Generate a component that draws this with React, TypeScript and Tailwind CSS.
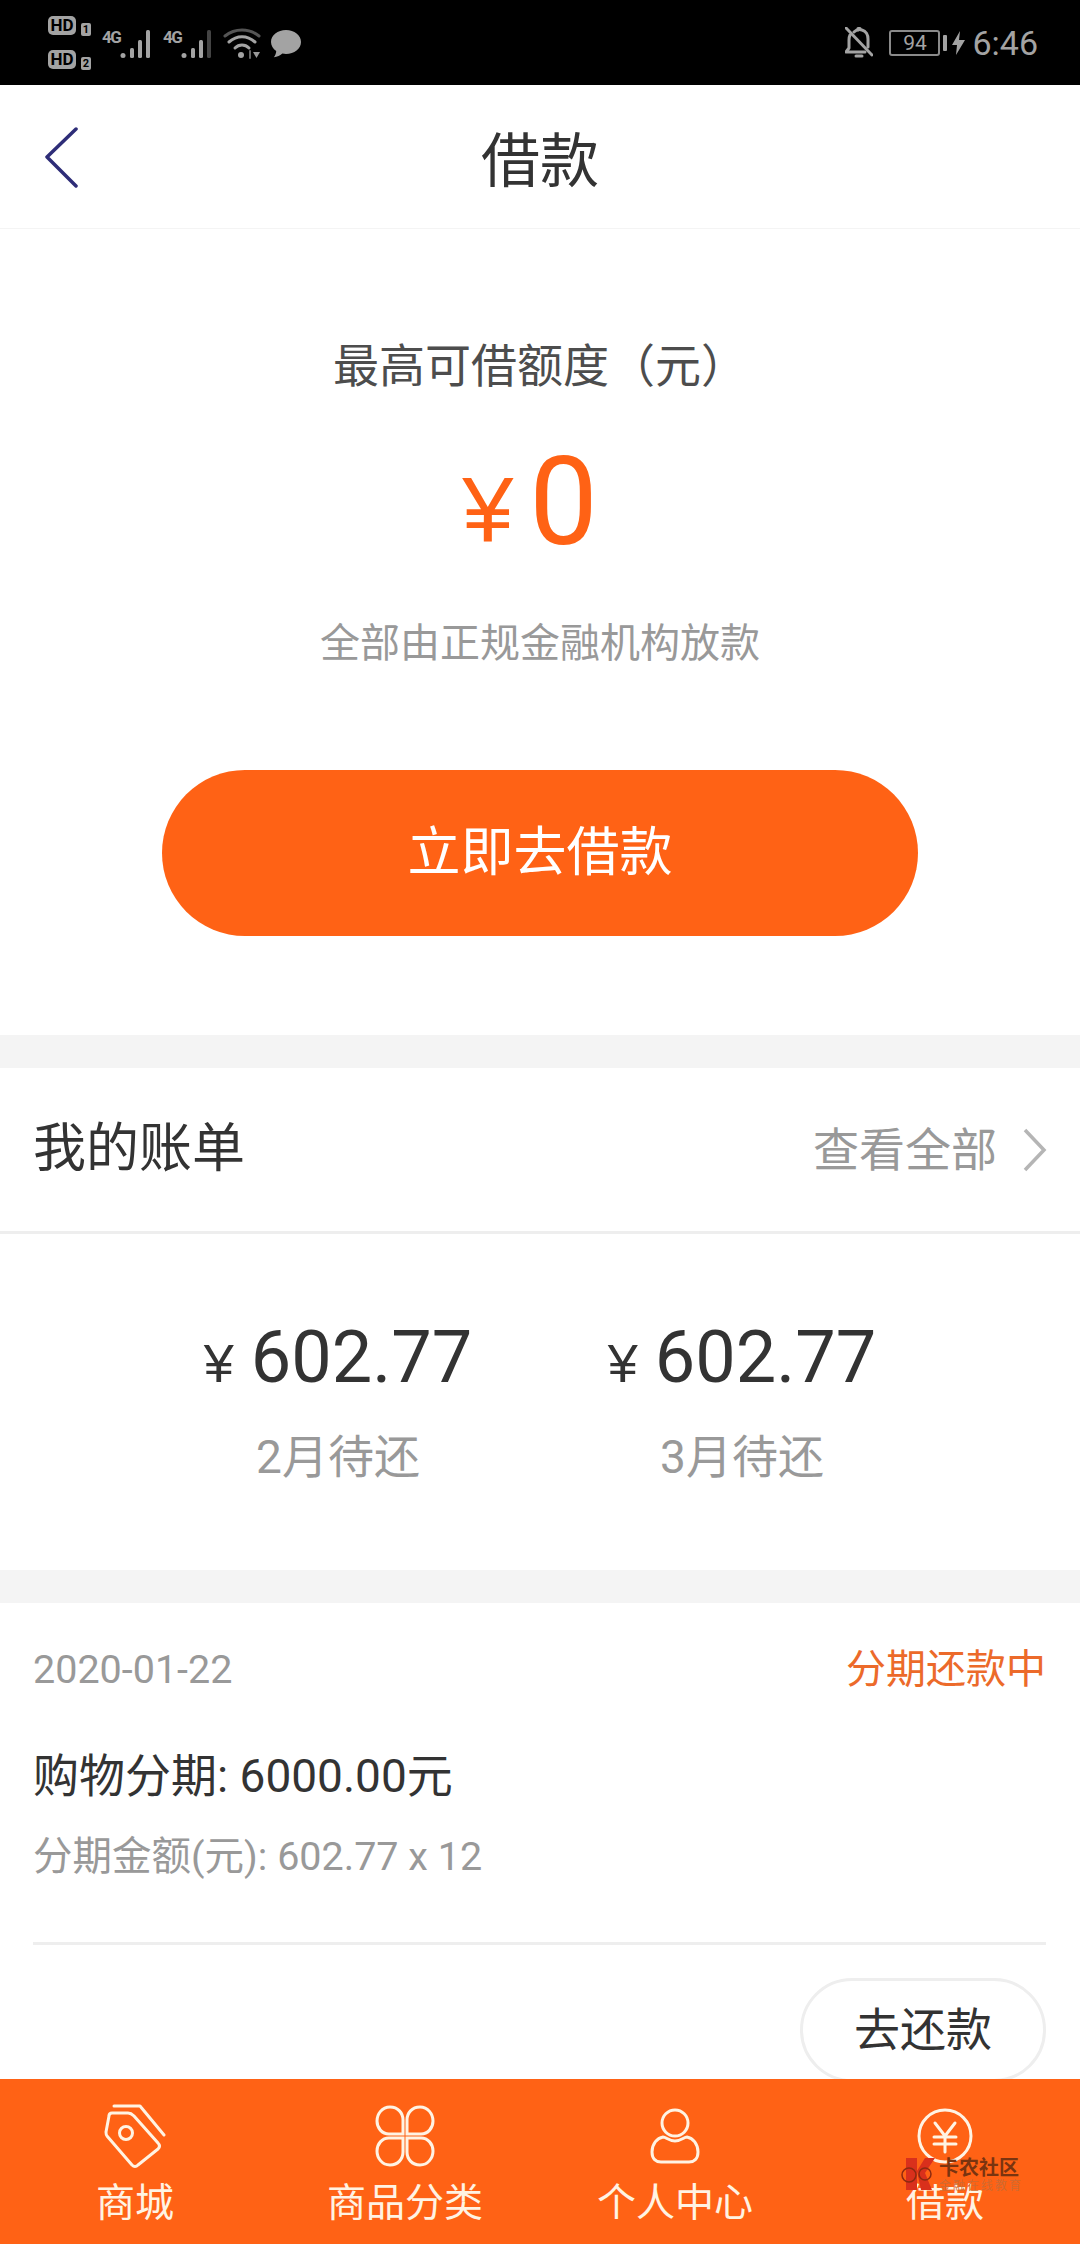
const font = { cjk: "font-['Roboto','Noto_Sans_CJK_SC',sans-serif]" }

function Signal({ dim }: { dim?: boolean }) {
  return (
    <svg width="33" height="32" viewBox="0 0 33 32" className="text-[#a3a3a3]">
      <circle cx="3" cy="27.5" r="2.5" fill="currentColor" />
      <rect x="10" y="20" width="4" height="10" rx="1.5" fill="currentColor" />
      <rect x="18" y="12" width="4" height="18" rx="1.5" fill="currentColor" />
      <rect x="26" y="2" width="4" height="28" rx="1.5" fill={dim ? "#444" : "currentColor"} />
    </svg>
  )
}

function HdBadge({ n }: { n: number }) {
  return (
    <div className="flex items-end gap-[5px]">
      <span className="w-[28px] h-[19px] rounded-[5px] bg-[#a3a3a3] text-black text-[17px] leading-[19px] font-bold text-center font-['Roboto',sans-serif]">HD</span>
      <span className="w-[10px] h-[13px] -mb-[1px] rounded-[2px] bg-[#a3a3a3] text-black text-[11px] leading-[13px] font-bold text-center font-['Roboto',sans-serif]">{n}</span>
    </div>
  )
}

function NetType() {
  return (
    <span className="w-[18px] text-[17px] leading-[18px] font-bold mb-[14px] tracking-[-1.5px] font-['Roboto',sans-serif]">4G</span>
  )
}

function StatusBar() {
  return (
    <div className="h-[85px] bg-black flex items-center justify-between pl-[48px] pr-[42px] text-[#a3a3a3]">
      <div className="flex items-center">
        <div className="flex flex-col gap-[15px] -mt-[1px]">
          <HdBadge n={1} />
          <HdBadge n={2} />
        </div>
        <div className="flex items-end ml-[11px] mt-[2px]">
          <NetType />
          <Signal />
        </div>
        <div className="flex items-end ml-[10px] mt-[2px]">
          <NetType />
          <Signal dim />
        </div>
        <svg width="38" height="32" viewBox="0 0 38 32" className="ml-[9px] mt-[2px]" fill="none" stroke="currentColor" strokeWidth="3" strokeLinecap="round">
          <path d="M2 8 C12 0 26 0 36 8" stroke="#555" />
          <path d="M6 14 C14 7 24 7 32 14" />
          <path d="M12 20 C16 16 22 16 26 20" />
          <circle cx="18" cy="27" r="3" fill="currentColor" stroke="none" />
          <path d="M27 23v7" stroke="#666" strokeWidth="2" />
          <path d="M30 24h7l-3.500 6z" fill="#999" stroke="none" />
        </svg>
        <svg width="32" height="32" viewBox="0 0 32 32" className="ml-[9px] mt-[2px]" fill="currentColor">
          <path d="M16 2C7.700 2 1 7.400 1 14c0 3.600 2 6.800 5.200 9 .1 2-1 4.600-2.400 6.300 3.200-.2 6.800-1.800 8.600-3.700 1.200.2 2.400.4 3.600.4 8.300 0 15-5.400 15-12S24.300 2 16 2z" />
        </svg>
      </div>
      <div className="flex items-center">
        <svg width="28" height="32" viewBox="0 0 28 32" fill="none" stroke="currentColor" strokeWidth="3" strokeLinecap="round" strokeLinejoin="round">
          <path d="M5 8c-1 2-1 3-1 5v8l-3 4h19" />
          <path d="M9 5c2-2 5-3 8-2 4 1 6 5 6 9v8" />
          <path d="M13 3V1.500h2" />
          <path d="M11 29h6" />
          <path d="M1 1l26 27" />
        </svg>
        <div className="ml-[16px] w-[51px] h-[26px] rounded-[3px] border-2 border-[#8a8a8a] text-[21px] leading-[22px] text-center font-['Roboto',sans-serif]">94</div>
        <div className="ml-[3px] w-[4px] h-[16px] bg-[#a3a3a3] rounded-[1px]" />
        <svg width="13" height="24" viewBox="0 0 13 24" className="ml-[5px]" fill="currentColor">
          <path d="M8 0 0 14h5l-1 10 9-15H7z" />
        </svg>
        <span className="ml-[7px] text-[34px] leading-none font-['Roboto',sans-serif]">6:46</span>
      </div>
    </div>
  )
}

function TopBar() {
  return (
    <div className="relative h-[144px] border-b border-[#f4f4f4] flex items-center justify-center bg-white">
      <svg width="36" height="62" viewBox="0 0 36 62" fill="none" stroke="#2e2d78" strokeWidth="3.500" strokeLinecap="round" strokeLinejoin="round" className="absolute left-[44px] top-[42px]">
        <path d="M32 2 3 30l29 29" />
      </svg>
      <h1 className="text-[59px] leading-none text-[#333] mt-[10px]">借款</h1>
    </div>
  )
}

function LoanCard() {
  return (
    <section className="bg-white h-[806px] flex flex-col items-center">
      <p className="mt-[111px] text-[46px] leading-[52px] text-[#4d4d4d]">最高可借额度（元）</p>
      <div className="mt-[53px] pr-[20px] flex items-center h-[116px] text-[#ff6215]">
        <span className="text-[92px] leading-none mr-[16px] font-['Liberation_Sans',sans-serif] mt-[14px]">¥</span>
        <span className="text-[122px] leading-none font-['Roboto',sans-serif]">0</span>
      </div>
      <p className="mt-[59px] text-[40px] leading-[48px] text-[#999]">全部由正规金融机构放款</p>
      <button className="mt-[102px] w-[756px] h-[166px] rounded-full bg-[#ff6215] text-white text-[53px] leading-none">立即去借款</button>
    </section>
  )
}

function BillAmount({ month }: { month: string }) {
  return (
    <div className="flex flex-col items-center w-[270px]">
      <div className="flex items-baseline text-[#333] font-['Roboto',sans-serif]">
        <span className="text-[54px] leading-none mr-[17px] font-['Liberation_Sans',sans-serif]">¥</span>
        <span className="text-[72px] leading-[80px]">602.77</span>
      </div>
      <span className="mt-[32px] text-[46px] leading-[54px] text-[#999]">{month}</span>
    </div>
  )
}

function Bills() {
  return (
    <section className="bg-white">
      <div className="h-[166px] pl-[33px] pr-[34px] flex items-center justify-between border-b-[3px] border-[#eeeeee]">
        <span className="text-[53px] leading-none text-[#333]">我的账单</span>
        <div className="flex items-center text-[#999]">
          <span className="text-[46px] leading-none">查看全部</span>
          <svg width="24" height="44" viewBox="0 0 24 44" fill="none" stroke="#b5b5b5" strokeWidth="3.500" className="ml-[26px] mr-[-1px]">
            <path d="M2 2l19 20L2 42" />
          </svg>
        </div>
      </div>
      <div className="h-[336px] flex justify-center gap-[134px] pt-[84px]">
        <BillAmount month="2月待还" />
        <BillAmount month="3月待还" />
      </div>
    </section>
  )
}

function Order() {
  return (
    <section className="bg-white pl-[33px] pr-[34px] flex-1">
      <div className="flex items-center justify-between pt-[44px]">
        <span className="text-[39.5px] leading-[46px] text-[#999]">2020-01-22</span>
        <span className="text-[40px] leading-[46px] text-[#ec6a2a]">分期还款中</span>
      </div>
      <p className="mt-[55px] text-[46px] leading-[56px] text-[#333]">购物分期: 6000.00元</p>
      <p className="mt-[30px] text-[39.5px] leading-[46px] text-[#999]">分期金额(元): 602.77 x 12</p>
      <div className="mt-[62px] border-t-[3px] border-[#eeeeee] flex justify-end pt-[33px]">
        <button className="w-[246px] h-[104px] rounded-full border-[3px] border-[#eeeeee] text-[46px] leading-none text-[#333]">去还款</button>
      </div>
    </section>
  )
}

function TagIcon() {
  return (
    <svg width="62" height="66" viewBox="0 0 62 66" fill="none" stroke="currentColor" strokeWidth="3" strokeLinecap="round" strokeLinejoin="round">
      <path d="M10 3h26l24 29" />
      <path d="M8 10h16c3 0 4 1 6 3l24 27c2 2 2 4 0 6L34 62c-2 2-4 2-6 0L3 33c-1-1-1-2-1-4l3-16c0-2 1-3 3-3z" />
      <circle cx="22" cy="30" r="6.500" />
    </svg>
  )
}

function CloverIcon() {
  return (
    <svg width="60" height="62" viewBox="0 0 60 62" fill="none" stroke="currentColor" strokeWidth="3">
      <path d="M28 29H14C7 29 2 23 2 16S7 2 15 2s13 6 13 13z" />
      <path d="M32 29h14c7 0 12-6 12-13S53 2 45 2s-13 6-13 13z" />
      <path d="M28 33H14C7 33 2 39 2 46s5 14 13 14 13-6 13-13z" />
      <path d="M32 33h14c7 0 12 6 12 13s-5 14-13 14-13-6-13-13z" />
    </svg>
  )
}

function PersonIcon() {
  return (
    <svg width="50" height="56" viewBox="0 0 50 56" fill="none" stroke="currentColor" strokeWidth="3" strokeLinecap="round" strokeLinejoin="round">
      <circle cx="25" cy="15" r="13" />
      <path d="M13 29c-6 1-11 7-11 15 0 7 4 10 9 10h28c5 0 9-3 9-10 0-8-5-14-11-15-3 0-6 4-12 4s-9-4-12-4z" />
    </svg>
  )
}

function YuanIcon() {
  return (
    <svg width="56" height="56" viewBox="0 0 56 56" fill="none" stroke="currentColor" strokeWidth="3" strokeLinecap="round">
      <circle cx="28" cy="28" r="26" />
      <path d="M18 15l10 13 10-13M28 28v16M17 29h22M17 36h22" />
    </svg>
  )
}

function Tab({ icon, label }: { icon: React.ReactNode; label: string }) {
  return (
    <div className="flex flex-col items-center justify-end h-full">
      <div className="h-[66px] flex items-center justify-center">{icon}</div>
      <span className="mt-[11px] text-[39px] leading-[46px]">{label}</span>
    </div>
  )
}

function TabBar() {
  return (
    <nav className="absolute left-0 right-0 bottom-0 h-[165px] bg-[#ff6215] text-[#fff3e3] grid grid-cols-4 pb-[18px] pt-[22px]">
      <Tab icon={<TagIcon />} label="商城" />
      <Tab icon={<CloverIcon />} label="商品分类" />
      <Tab icon={<PersonIcon />} label="个人中心" />
      <Tab icon={<YuanIcon />} label="借款" />
    </nav>
  )
}

function Watermark() {
  return (
    <div className="absolute left-[899px] top-[2157px] flex items-start">
      <svg width="37" height="34" viewBox="0 0 37 34">
        <rect x="7" y="1" width="11" height="32" fill="#d9301c" />
        <path d="M18 14 26 1h10L26 16l7 17H22z" fill="#d9301c" />
        <circle cx="10" cy="18" r="7" fill="none" stroke="#8c2a10" strokeWidth="1.500" />
        <circle cx="26" cy="17" r="6" fill="none" stroke="#8c2a10" strokeWidth="1.500" />
      </svg>
      <div className="ml-[3px] flex flex-col">
        <span className="text-[20px] leading-[22px] font-bold text-[#7a3410]">卡农社区</span>
        <span className="text-[12px] leading-[14px] tracking-[2px] text-[#d06a30]">金融在线教育</span>
      </div>
    </div>
  )
}

export default function App() {
  return (
    <div className={`relative flex flex-col w-[1080px] h-[2244px] overflow-hidden bg-[#f4f4f4] ${font.cjk}`}>
      <StatusBar />
      <TopBar />
      <LoanCard />
      <div className="h-[33px]" />
      <Bills />
      <div className="h-[33px]" />
      <Order />
      <TabBar />
      <Watermark />
    </div>
  )
}
